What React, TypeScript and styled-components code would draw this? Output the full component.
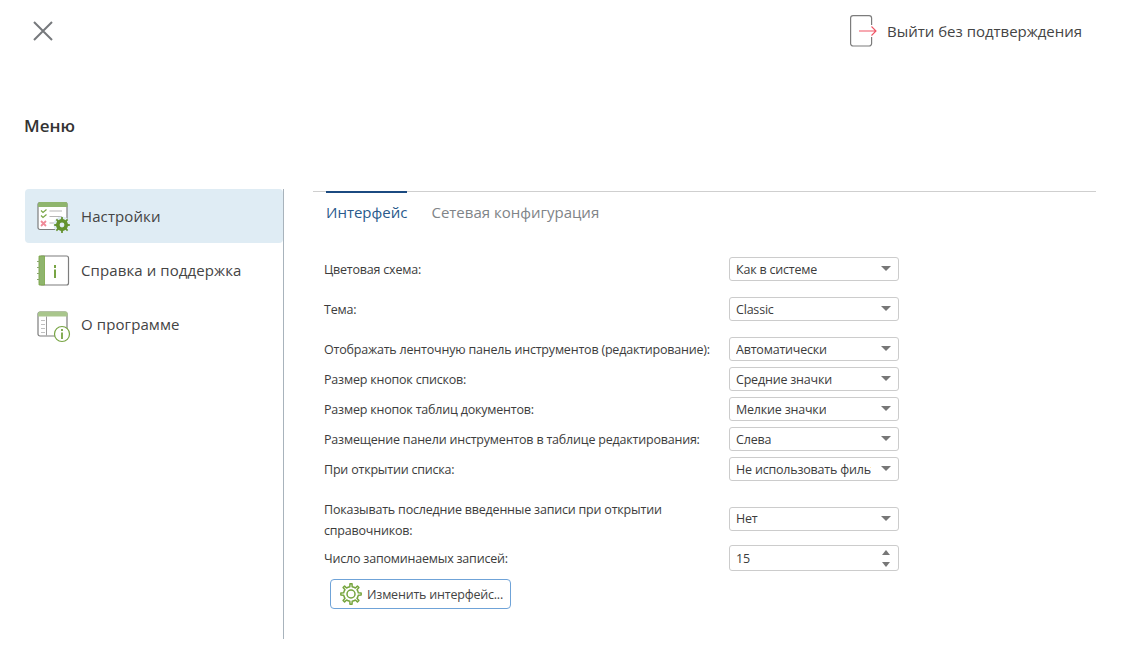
import React from "react";
import styled, { createGlobalStyle } from "styled-components";

const GlobalStyle = createGlobalStyle`
  html, body {
    margin: 0;
    padding: 0;
    background: #fff;
  }
  body {
    font-family: "Open Sans", "Noto Sans", sans-serif;
    color: #333;
  }
`;

// outline of a cog, used by the sidebar icon and the button icon
const gearPath = (cx: number, cy: number, outer: number, inner: number, teeth = 8) => {
  const points: string[] = [];
  const step = (Math.PI * 2) / teeth;
  for (let i = 0; i < teeth; i++) {
    const a = i * step - Math.PI / 2;
    const corners: [number, number][] = [
      [a - step * 0.5, inner],
      [a - step * 0.2, inner],
      [a - step * 0.13, outer],
      [a + step * 0.13, outer],
      [a + step * 0.2, inner],
    ];
    corners.forEach(([ang, r]) => {
      points.push(`${(cx + Math.cos(ang) * r).toFixed(2)} ${(cy + Math.sin(ang) * r).toFixed(2)}`);
    });
  }
  return `M${points.join("L")}Z`;
};

const CloseIcon = () => (
  <svg width="22" height="22" viewBox="0 0 22 22">
    <path d="M2 2 L20 20 M20 2 L2 20" stroke="#76797c" strokeWidth="2" fill="none" />
  </svg>
);

const ExitIcon = () => (
  <svg width="28" height="32" viewBox="0 0 28 32">
    <path
      d="M21.6 10 V3 A2.5 2.5 0 0 0 19.1 0.6 H3.1 A2.5 2.5 0 0 0 0.6 3 V28.5 A2.5 2.5 0 0 0 3.1 31 H19.1 A2.5 2.5 0 0 0 21.6 28.5 V22"
      stroke="#7c7c7c"
      strokeWidth="1.2"
      fill="none"
    />
    <path d="M9 16 H26 M21.5 11.5 L26 16 L21.5 20.5" stroke="#ef5464" strokeWidth="1.1" fill="none" />
  </svg>
);

const SettingsIcon = () => (
  <svg width="34" height="34" viewBox="0 0 34 34">
    <rect x="1" y="1.5" width="29" height="27" rx="2" fill="#fff" stroke="#7d7d7d" strokeWidth="1.2" />
    <path d="M1 6 V3 A2 2 0 0 1 3 1 H28 A2 2 0 0 1 30.5 3 V6 Z" fill="#8fb56d" />
    <path d="M4 9.5 L6 11.5 L9.5 8.5 M4 14.5 L6 16.5 L9.5 13.5" stroke="#78a544" strokeWidth="1.2" fill="none" />
    <path d="M4 20 L9 25 M9 20 L4 25" stroke="#f08a98" strokeWidth="1.8" fill="none" />
    <path d="M12.5 10 H25 M12.5 15.5 H25 M12.5 22 H19" stroke="#b5b5b5" strokeWidth="1.2" fill="none" />
    <circle cx="25" cy="24" r="8.5" fill="#dfecf4" />
    <path d={gearPath(25, 24, 8, 6)} fill="#64922f" />
    <circle cx="25" cy="24" r="2.4" fill="#dfecf4" />
  </svg>
);

const HelpIcon = () => (
  <svg width="34" height="34" viewBox="0 0 34 34">
    <rect x="2.5" y="1" width="29" height="29" rx="2" fill="#fff" stroke="#7d7d7d" strokeWidth="1.2" />
    <path d="M2 1 H7.5 V30 H2 Z" fill="#8fb56d" stroke="#78a544" strokeWidth="0.8" />
    <path d="M0 6.5 H3 M0 12.5 H3 M0 18.5 H3 M0 24.5 H3" stroke="#8aa96c" strokeWidth="1.2" />
    <path d="M18 10 V13 M18 14.5 V23" stroke="#78a544" strokeWidth="2" fill="none" />
  </svg>
);

const AboutIcon = () => (
  <svg width="34" height="34" viewBox="0 -1.5 34 34">
    <rect x="1" y="1.5" width="29" height="24" rx="2" fill="#fff" stroke="#7d7d7d" strokeWidth="1.2" />
    <path d="M1 6 V3 A2 2 0 0 1 3 1 H28 A2 2 0 0 1 30.5 3 V6 Z" fill="#a9c68c" />
    <path d="M9.5 6 V25" stroke="#9a9a9a" strokeWidth="1" />
    <path d="M4 10 H8 M4 14 H8 M4 18 H8 M4 22 H8" stroke="#c0c0c0" strokeWidth="1" />
    <circle cx="25" cy="23.5" r="7.5" fill="#fff" stroke="#78a544" strokeWidth="1.2" />
    <path d="M25 18.5 V20.5 M25 22 V28.5" stroke="#78a544" strokeWidth="1.8" fill="none" />
  </svg>
);

const ButtonGear = () => (
  <svg width="22" height="22" viewBox="0 0 22 22">
    <path d={gearPath(11, 11, 10.2, 7.4)} fill="none" stroke="#76a53e" strokeWidth="1.5" strokeLinejoin="round" />
    <circle cx="11" cy="11" r="4" fill="none" stroke="#76a53e" strokeWidth="1.5" />
  </svg>
);

const Page = styled.div`
  width: 1121px;
  height: 647px;
  display: flex;
  flex-direction: column;
  overflow: hidden;
`;

const Header = styled.header`
  height: 62px;
  display: flex;
  align-items: center;
  justify-content: space-between;
  padding: 0 39px 0 32px;
`;

const CloseButton = styled.div`
  display: flex;
`;

const ExitLink = styled.div`
  display: flex;
  align-items: center;
  gap: 9px;
  font-size: 15px;
  letter-spacing: -0.02px;
  color: #444;
`;

const Title = styled.h1`
  margin: 52px 0 0 24px;
  height: 75px;
  font-size: 17px;
  line-height: 24px;
  font-weight: 600;
  color: #333;
`;

const Body = styled.div`
  display: flex;
  margin-left: 25px;
`;

const Sidebar = styled.nav`
  width: 259px;
  height: 450px;
  box-sizing: border-box;
  border-right: 1px solid #a8b3bc;
`;

const NavItem = styled.div<{ $active?: boolean }>`
  height: 54px;
  display: flex;
  align-items: center;
  gap: 10px;
  padding-left: 12px;
  border-radius: 4px;
  background: ${(p) => (p.$active ? "#dfecf4" : "transparent")};
  font-size: 15px;
  letter-spacing: 0.1px;
  color: #444;
`;

const NavIcon = styled.span`
  display: flex;
  padding-top: 3px;
`;

const Main = styled.main`
  width: 783px;
  margin-left: 29px;
`;

const TabBar = styled.div`
  display: flex;
  gap: 24px;
  padding: 0 13px;
  margin-top: 2px;
  border-top: 1px solid #cfcfcf;
`;

const Tab = styled.div<{ $active?: boolean }>`
  margin-top: -1px;
  padding-top: 9px;
  border-top: 2px solid ${(p) => (p.$active ? "#1b4a80" : "transparent")};
  font-size: 15px;
  line-height: 21px;
  color: ${(p) => (p.$active ? "#2a5a8c" : "#808488")};
`;

const Form = styled.div`
  display: flex;
  flex-direction: column;
  gap: 6px;
  padding: 34px 0 0 12px;
`;

const Row = styled.div<{ $gap?: number }>`
  display: flex;
  align-items: center;
  margin-top: ${(p) => p.$gap ?? 0}px;
`;

const Label = styled.div`
  width: 405px;
  margin-left: -1px;
  flex-shrink: 0;
  font-size: 12.5px;
  line-height: 21px;
  letter-spacing: -0.2px;
  color: #3c3c3c;
`;

const WrapLabel = styled(Label)`
  width: 370px;
  margin-right: 35px;
`;

const Field = styled.div<{ $height?: number; $lift?: number }>`
  position: relative;
  box-sizing: border-box;
  width: 170px;
  height: ${(p) => p.$height ?? 24}px;
  margin-bottom: ${(p) => p.$lift ?? 0}px;
  padding: 0 27px 0 6px;
  display: flex;
  align-items: center;
  border: 1px solid #ccc;
  border-radius: 3px;
  background: #fff;
  font-size: 12.5px;
  letter-spacing: -0.2px;
  color: #3c3c3c;
`;

const FieldText = styled.span`
  overflow: hidden;
  white-space: nowrap;
`;

const Arrow = styled.span`
  position: absolute;
  right: 7px;
  top: 8px;
  border-left: 5px solid transparent;
  border-right: 5px solid transparent;
  border-top: 5px solid #777;
`;

const SpinUp = styled.span`
  position: absolute;
  right: 8px;
  top: 4px;
  border-left: 4.5px solid transparent;
  border-right: 4.5px solid transparent;
  border-bottom: 5px solid #777;
`;

const SpinDown = styled.span`
  position: absolute;
  right: 8px;
  bottom: 3px;
  border-left: 4.5px solid transparent;
  border-right: 4.5px solid transparent;
  border-top: 5px solid #777;
`;

const ChangeButton = styled.div`
  box-sizing: border-box;
  width: 181px;
  height: 30px;
  margin: 2px 0 0 5px;
  display: flex;
  align-items: center;
  gap: 5px;
  padding-left: 9px;
  border: 1px solid #6fa3d8;
  border-radius: 4px;
  font-size: 12.5px;
  letter-spacing: -0.2px;
  color: #444;
`;

const Select = ({ value, lift }: { value: string; lift?: number }) => (
  <Field $lift={lift}>
    <FieldText>{value}</FieldText>
    <Arrow />
  </Field>
);

export default function App() {
  return (
    <Page>
      <GlobalStyle />
      <Header>
        <CloseButton>
          <CloseIcon />
        </CloseButton>
        <ExitLink>
          <ExitIcon />
          Выйти без подтверждения
        </ExitLink>
      </Header>
      <Title>Меню</Title>
      <Body>
        <Sidebar>
          <NavItem $active>
            <NavIcon>
              <SettingsIcon />
            </NavIcon>
            Настройки
          </NavItem>
          <NavItem>
            <NavIcon>
              <HelpIcon />
            </NavIcon>
            Справка и поддержка
          </NavItem>
          <NavItem>
            <NavIcon>
              <AboutIcon />
            </NavIcon>
            О программе
          </NavItem>
        </Sidebar>
        <Main>
          <TabBar>
            <Tab $active>Интерфейс</Tab>
            <Tab>Сетевая конфигурация</Tab>
          </TabBar>
          <Form>
            <Row>
              <Label>Цветовая схема:</Label>
              <Select value="Как в системе" />
            </Row>
            <Row $gap={10}>
              <Label>Тема:</Label>
              <Select value="Classic" />
            </Row>
            <Row $gap={10}>
              <Label>Отображать ленточную панель инструментов (редактирование):</Label>
              <Select value="Автоматически" />
            </Row>
            <Row>
              <Label>Размер кнопок списков:</Label>
              <Select value="Средние значки" />
            </Row>
            <Row>
              <Label>Размер кнопок таблиц документов:</Label>
              <Select value="Мелкие значки" />
            </Row>
            <Row>
              <Label>Размещение панели инструментов в таблице редактирования:</Label>
              <Select value="Слева" />
            </Row>
            <Row>
              <Label>При открытии списка:</Label>
              <Select value="Не использовать фильтр" />
            </Row>
            <Row $gap={12}>
              <WrapLabel>Показывать последние введенные записи при открытии справочников:</WrapLabel>
              <Select value="Нет" lift={3} />
            </Row>
            <Row $gap={-2}>
              <Label>Число запоминаемых записей:</Label>
              <Field $height={26}>
                <FieldText>15</FieldText>
                <SpinUp />
                <SpinDown />
              </Field>
            </Row>
            <ChangeButton>
              <ButtonGear />
              Изменить интерфейс...
            </ChangeButton>
          </Form>
        </Main>
      </Body>
    </Page>
  );
}
